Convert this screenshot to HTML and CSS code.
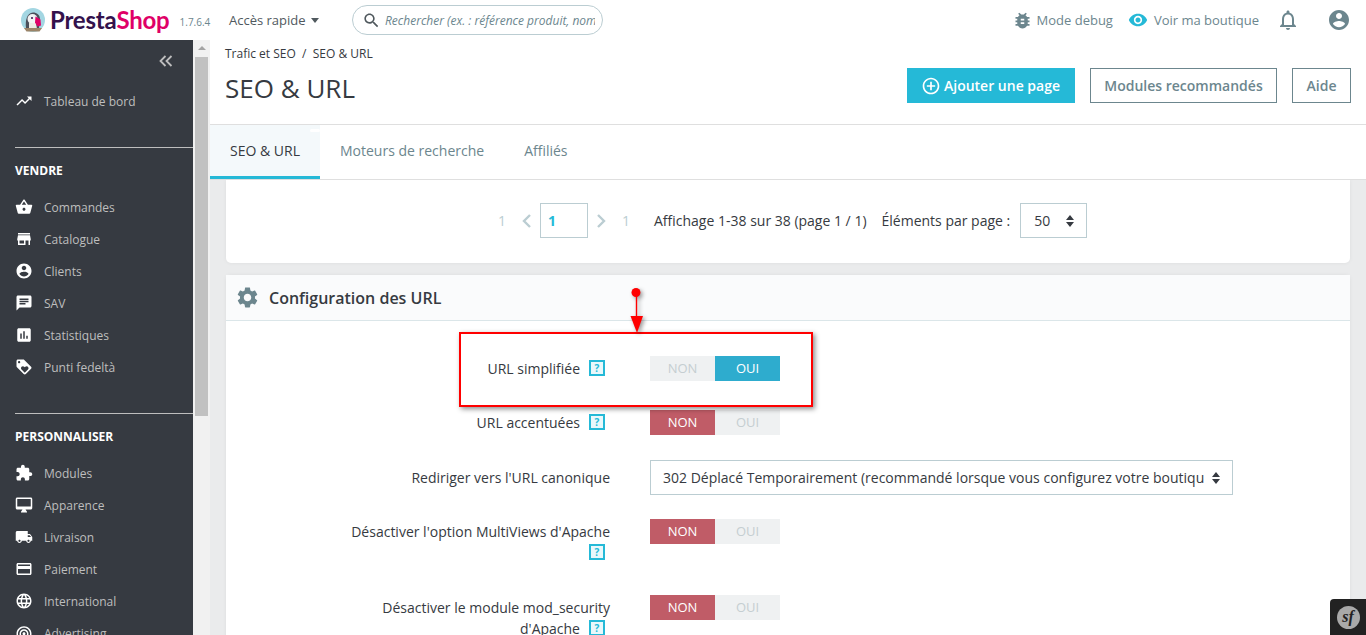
FILE: index.html
```html
<!DOCTYPE html>
<html lang="fr">
<head>
<meta charset="utf-8">
<title>SEO &amp; URL</title>
<link rel="stylesheet" href="styles.css">
</head>
<body>
<svg class="sprite" aria-hidden="true">
  <symbol id="i-trend" viewBox="0 0 24 24"><path d="M16 6l2.29 2.29-4.88 4.88-4-4L2 16.59 3.41 18l6-6 4 4 6.3-6.29L22 12V6z"/></symbol>
  <symbol id="i-basket" viewBox="0 0 24 24"><path d="M17.21 9l-4.38-6.56c-.19-.28-.51-.42-.83-.42-.32 0-.64.14-.83.43L6.79 9H2c-.55 0-1 .45-1 1 0 .09.01.18.04.27l2.54 9.27c.23.84 1 1.46 1.92 1.46h13c.92 0 1.69-.62 1.93-1.46l2.54-9.27L23 10c0-.55-.45-1-1-1h-4.79zM9 9l3-4.4L15 9H9zm3 8c-1.1 0-2-.9-2-2s.9-2 2-2 2 .9 2 2-.9 2-2 2z"/></symbol>
  <symbol id="i-store" viewBox="0 0 24 24"><path d="M20 4H4v2h16V4zm1 10v-2l-1-5H4l-1 5v2h1v6h10v-6h4v6h2v-6h1zm-9 4H6v-4h6v4z"/></symbol>
  <symbol id="i-account" viewBox="0 0 24 24"><path d="M12 2C6.48 2 2 6.48 2 12s4.48 10 10 10 10-4.48 10-10S17.52 2 12 2zm0 3c1.66 0 3 1.34 3 3s-1.34 3-3 3-3-1.34-3-3 1.34-3 3-3zm0 14.2c-2.5 0-4.71-1.28-6-3.22.03-1.99 4-3.08 6-3.08 1.99 0 5.97 1.09 6 3.08-1.29 1.94-3.5 3.22-6 3.22z"/></symbol>
  <symbol id="i-chat" viewBox="0 0 24 24"><path d="M20 2H4c-1.1 0-1.99.9-1.99 2L2 22l4-4h14c1.1 0 2-.9 2-2V4c0-1.1-.9-2-2-2zM6 9h12v2H6V9zm8 5H6v-2h8v2zm4-6H6V6h12v2z"/></symbol>
  <symbol id="i-stats" viewBox="0 0 24 24"><path d="M19 3H5c-1.1 0-2 .9-2 2v14c0 1.1.9 2 2 2h14c1.1 0 2-.9 2-2V5c0-1.1-.9-2-2-2zM9 17H7v-7h2v7zm4 0h-2V7h2v10zm4 0h-2v-4h2v4z"/></symbol>
  <symbol id="i-loyalty" viewBox="0 0 24 24"><path d="M21.41 11.58l-9-9C12.05 2.22 11.55 2 11 2H4c-1.1 0-2 .9-2 2v7c0 .55.22 1.05.59 1.42l9 9c.36.36.86.58 1.41.58s1.05-.22 1.41-.59l7-7c.37-.36.59-.86.59-1.41s-.23-1.06-.59-1.42zM5.5 7C4.67 7 4 6.33 4 5.5S4.67 4 5.5 4 7 4.67 7 5.5 6.33 7 5.5 7zm11.77 8.27L13 19.54l-4.27-4.27C8.28 14.81 8 14.19 8 13.5c0-1.38 1.12-2.5 2.5-2.5.69 0 1.32.28 1.77.74l.73.72.73-.73c.45-.45 1.08-.73 1.77-.73 1.38 0 2.5 1.12 2.5 2.5 0 .69-.28 1.32-.73 1.77z"/></symbol>
  <symbol id="i-puzzle" viewBox="0 0 24 24"><path d="M20.5 11H19V7c0-1.1-.9-2-2-2h-4V3.5C13 2.12 11.88 1 10.5 1S8 2.12 8 3.5V5H4c-1.1 0-1.99.9-1.99 2v3.8H3.5c1.49 0 2.7 1.21 2.7 2.7s-1.21 2.7-2.7 2.7H2V20c0 1.1.9 2 2 2h3.8v-1.5c0-1.49 1.21-2.7 2.7-2.7 1.49 0 2.7 1.21 2.7 2.7V22H17c1.1 0 2-.9 2-2v-4h1.5c1.38 0 2.5-1.12 2.5-2.5S21.88 11 20.5 11z"/></symbol>
  <symbol id="i-desktop" viewBox="0 0 24 24"><path d="M21 2H3c-1.1 0-2 .9-2 2v12c0 1.1.9 2 2 2h7l-2 3v1h8v-1l-2-3h7c1.1 0 2-.9 2-2V4c0-1.1-.9-2-2-2zm0 12H3V4h18v10z"/></symbol>
  <symbol id="i-truck" viewBox="0 0 24 24"><path d="M20 8h-3V4H3c-1.1 0-2 .9-2 2v11h2c0 1.66 1.34 3 3 3s3-1.34 3-3h6c0 1.66 1.34 3 3 3s3-1.34 3-3h2v-5l-3-4zM6 18.5c-.83 0-1.5-.67-1.5-1.5s.67-1.5 1.5-1.5 1.5.67 1.5 1.5-.67 1.5-1.5 1.5zm13.5-9l1.96 2.5H17V9.5h2.5zm-1.5 9c-.83 0-1.5-.67-1.5-1.5s.67-1.5 1.5-1.5 1.5.67 1.5 1.5-.67 1.5-1.5 1.5z"/></symbol>
  <symbol id="i-card" viewBox="0 0 24 24"><path d="M20 4H4c-1.11 0-1.99.89-1.99 2L2 18c0 1.11.89 2 2 2h16c1.11 0 2-.89 2-2V6c0-1.11-.89-2-2-2zm0 14H4v-6h16v6zm0-10H4V6h16v2z"/></symbol>
  <symbol id="i-globe" viewBox="0 0 24 24"><path d="M11.99 2C6.47 2 2 6.48 2 12s4.47 10 9.99 10C17.52 22 22 17.52 22 12S17.52 2 11.99 2zm6.93 6h-2.95c-.32-1.25-.78-2.45-1.38-3.56 1.84.63 3.37 1.91 4.33 3.56zM12 4.04c.83 1.2 1.48 2.53 1.91 3.96h-3.82c.43-1.43 1.08-2.76 1.91-3.96zM4.26 14C4.1 13.36 4 12.69 4 12s.1-1.36.26-2h3.38c-.08.66-.14 1.32-.14 2 0 .68.06 1.34.14 2H4.26zm.82 2h2.95c.32 1.25.78 2.45 1.38 3.56-1.84-.63-3.37-1.9-4.33-3.56zm2.95-8H5.08c.96-1.66 2.49-2.93 4.33-3.56C8.81 5.55 8.35 6.75 8.03 8zM12 19.96c-.83-1.2-1.48-2.53-1.91-3.96h3.82c-.43 1.43-1.08 2.76-1.91 3.96zM14.34 14H9.66c-.09-.66-.16-1.32-.16-2 0-.68.07-1.35.16-2h4.68c.09.65.16 1.32.16 2 0 .68-.07 1.34-.16 2zm.25 5.56c.6-1.11 1.06-2.31 1.38-3.56h2.95c-.96 1.65-2.49 2.93-4.33 3.56zM16.36 14c.08-.66.14-1.32.14-2 0-.68-.06-1.34-.14-2h3.38c.16.64.26 1.31.26 2s-.1 1.36-.26 2h-3.38z"/></symbol>
  <symbol id="i-antenna" viewBox="0 0 24 24"><path d="M12 11c-1.1 0-2 .9-2 2s.9 2 2 2 2-.9 2-2-.9-2-2-2zm6 2c0-3.31-2.69-6-6-6s-6 2.69-6 6c0 2.22 1.21 4.15 3 5.19l1-1.74c-1.19-.7-2-1.97-2-3.45 0-2.21 1.79-4 4-4s4 1.79 4 4c0 1.48-.81 2.75-2 3.45l1 1.74c1.79-1.04 3-2.97 3-5.19zM12 3C6.48 3 2 7.48 2 13c0 3.7 2.01 6.92 4.99 8.65l1-1.73C5.61 18.53 4 15.96 4 13c0-4.42 3.58-8 8-8s8 3.58 8 8c0 2.96-1.61 5.53-4 6.92l1 1.73c2.99-1.73 5-4.95 5-8.65 0-5.52-4.48-10-10-10z"/></symbol>
  <symbol id="i-bug" viewBox="0 0 24 24"><path d="M20 8h-2.81c-.45-.78-1.07-1.45-1.82-1.96L17 4.41 15.59 3l-2.17 2.17C12.96 5.06 12.49 5 12 5c-.49 0-.96.06-1.41.17L8.41 3 7 4.41l1.62 1.63C7.88 6.55 7.26 7.22 6.81 8H4v2h2.09c-.05.33-.09.66-.09 1v1H4v2h2v1c0 .34.04.67.09 1H4v2h2.81c1.04 1.79 2.97 3 5.19 3s4.15-1.21 5.19-3H20v-2h-2.09c.05-.33.09-.66.09-1v-1h2v-2h-2v-1c0-.34-.04-.67-.09-1H20V8zm-6 8h-4v-2h4v2zm0-4h-4v-2h4v2z"/></symbol>
  <symbol id="i-eye" viewBox="0 0 24 24"><path d="M12 4.5C7 4.5 2.73 7.61 1 12c1.73 4.39 6 7.5 11 7.5s9.27-3.11 11-7.5c-1.73-4.39-6-7.5-11-7.5zM12 17c-2.76 0-5-2.24-5-5s2.24-5 5-5 5 2.24 5 5-2.24 5-5 5zm0-8c-1.66 0-3 1.34-3 3s1.34 3 3 3 3-1.34 3-3-1.34-3-3-3z"/></symbol>
  <symbol id="i-bell" viewBox="0 0 24 24"><path d="M12 22c1.1 0 2-.9 2-2h-4c0 1.1.9 2 2 2zm6-6v-5c0-3.07-1.63-5.64-4.5-6.32V4c0-.83-.67-1.5-1.5-1.5s-1.5.67-1.5 1.5v.68C7.64 5.36 6 7.92 6 11v5l-2 2v1h16v-1l-2-2zm-2 1H8v-6c0-2.48 1.51-4.5 4-4.5s4 2.02 4 4.5v6z"/></symbol>
  <symbol id="i-search" viewBox="0 0 24 24"><path d="M15.5 14h-.79l-.28-.27C15.41 12.59 16 11.11 16 9.5 16 5.91 13.09 3 9.5 3S3 5.91 3 9.5 5.91 16 9.5 16c1.61 0 3.09-.59 4.23-1.57l.27.28v.79l5 4.99L20.49 19l-4.99-5zm-6 0C7.01 14 5 11.99 5 9.5S7.01 5 9.5 5 14 7.01 14 9.5 11.99 14 9.5 14z"/></symbol>
  <symbol id="i-gear" viewBox="0 0 24 24"><path d="M19.14 12.94c.04-.3.06-.61.06-.94 0-.32-.02-.64-.07-.94l2.03-1.58c.18-.14.23-.41.12-.61l-1.92-3.32c-.12-.22-.37-.29-.59-.22l-2.39.96c-.5-.38-1.03-.7-1.62-.94l-.36-2.54c-.04-.24-.24-.41-.48-.41h-3.84c-.24 0-.43.17-.47.41l-.36 2.54c-.59.24-1.13.57-1.62.94l-2.39-.96c-.22-.08-.47 0-.59.22L2.74 8.87c-.12.21-.08.47.12.61l2.03 1.58c-.05.3-.09.63-.09.94s.02.64.07.94l-2.03 1.58c-.18.14-.23.41-.12.61l1.92 3.32c.12.22.37.29.59.22l2.39-.96c.5.38 1.03.7 1.62.94l.36 2.54c.05.24.24.41.48.41h3.84c.24 0 .44-.17.47-.41l.36-2.54c.59-.24 1.13-.56 1.62-.94l2.39.96c.22.08.47 0 .59-.22l1.92-3.32c.12-.22.07-.47-.12-.61l-2.01-1.58zM12 15.6c-1.98 0-3.6-1.62-3.6-3.6s1.62-3.6 3.6-3.6 3.6 1.62 3.6 3.6-1.62 3.6-3.6 3.6z"/></symbol>
  <symbol id="i-add" viewBox="0 0 24 24"><path d="M13 7h-2v4H7v2h4v4h2v-4h4v-2h-4V7zm-1-5C6.48 2 2 6.48 2 12s4.48 10 10 10 10-4.48 10-10S17.52 2 12 2zm0 18c-4.41 0-8-3.59-8-8s3.59-8 8-8 8 3.59 8 8-3.59 8-8 8z"/></symbol>
  <symbol id="i-updown" viewBox="0 0 10 14"><path d="M5 1l4 5H1zM5 13L1 8h8z"/></symbol>
</svg>

<header class="topbar">
  <div class="brand">
    <svg class="puffin" viewBox="0 0 24 24" aria-hidden="true">
      <circle cx="12" cy="12" r="12" fill="#a3d6e2"/>
      <path d="M5 20C4 12 6 5 12 4.500c4 0 6.500 2.500 7 6l-1 9.500z" fill="#4b4f5a"/>
      <circle cx="11.500" cy="11" r="5" fill="#f2f3f4"/>
      <circle cx="11" cy="10" r="1" fill="#34124c"/>
      <path d="M8 15h7l1 6H8z" fill="#eceae4"/>
      <path d="M14.500 8.500l5 3 .5 6-3.500 1-2.500-4z" fill="#df0067"/>
      <path d="M3 20h18l-2.500 3.500h-13z" fill="#9b8468"/>
    </svg>
    <span class="wordmark">Presta<span class="wordmark-accent">Shop</span></span>
    <span class="version">1.7.6.4</span>
  </div>
  <div class="quick">Accès rapide<span class="caret"></span></div>
  <div class="search">
    <svg class="search-icon"><use href="#i-search"/></svg>
    <span class="search-text">Rechercher (ex. : référence produit, nom du client…)</span>
  </div>
  <div class="top-actions">
    <span class="top-link"><svg class="top-icon"><use href="#i-bug"/></svg>Mode debug</span>
    <span class="top-link top-link-shop"><svg class="top-icon-eye"><use href="#i-eye"/></svg>Voir ma boutique</span>
    <svg class="bell"><use href="#i-bell"/></svg>
    <svg class="avatar"><use href="#i-account"/></svg>
  </div>
</header>

<div class="frame">
  <nav class="sidebar">
    <div class="collapse"><svg class="collapse-icon" viewBox="0 0 14 12"><path d="M6.500 1L1.500 6l5 5M12.500 1l-5 5 5 5"/></svg></div>
    <a class="nav-item"><svg class="nav-icon"><use href="#i-trend"/></svg>Tableau de bord</a>
    <div class="nav-section">
      <h2 class="nav-title">VENDRE</h2>
      <a class="nav-item"><svg class="nav-icon"><use href="#i-basket"/></svg>Commandes</a>
      <a class="nav-item"><svg class="nav-icon"><use href="#i-store"/></svg>Catalogue</a>
      <a class="nav-item"><svg class="nav-icon"><use href="#i-account"/></svg>Clients</a>
      <a class="nav-item"><svg class="nav-icon"><use href="#i-chat"/></svg>SAV</a>
      <a class="nav-item"><svg class="nav-icon"><use href="#i-stats"/></svg>Statistiques</a>
      <a class="nav-item"><svg class="nav-icon"><use href="#i-loyalty"/></svg>Punti fedeltà</a>
    </div>
    <div class="nav-section">
      <h2 class="nav-title">PERSONNALISER</h2>
      <a class="nav-item"><svg class="nav-icon"><use href="#i-puzzle"/></svg>Modules</a>
      <a class="nav-item"><svg class="nav-icon"><use href="#i-desktop"/></svg>Apparence</a>
      <a class="nav-item"><svg class="nav-icon"><use href="#i-truck"/></svg>Livraison</a>
      <a class="nav-item"><svg class="nav-icon"><use href="#i-card"/></svg>Paiement</a>
      <a class="nav-item"><svg class="nav-icon"><use href="#i-globe"/></svg>International</a>
      <a class="nav-item"><svg class="nav-icon"><use href="#i-antenna"/></svg>Advertising</a>
    </div>
  </nav>
  <div class="scrollbar">
    <span class="scroll-arrow"></span>
    <span class="scroll-thumb"></span>
  </div>

  <main class="main">
    <section class="page-head">
      <div class="head-left">
        <div class="crumbs">Trafic et SEO&nbsp;&nbsp;/&nbsp;&nbsp;SEO &amp; URL</div>
        <h1 class="page-title">SEO &amp; URL</h1>
      </div>
      <div class="head-buttons">
        <a class="btn btn-primary"><svg class="btn-icon"><use href="#i-add"/></svg>Ajouter une page</a>
        <a class="btn btn-outline btn-modules">Modules recommandés</a>
        <a class="btn btn-outline btn-help">Aide</a>
      </div>
    </section>

    <div class="tabs">
      <a class="tab tab-active">SEO &amp; URL</a>
      <a class="tab">Moteurs de recherche</a>
      <a class="tab">Affiliés</a>
    </div>

    <div class="content">
      <section class="card card-list">
        <div class="pager">
          <span class="pager-num">1</span>
          <svg class="chev" viewBox="0 0 10 16"><path d="M8 2L2 8l6 6"/></svg>
          <span class="pager-input">1</span>
          <svg class="chev chev-right" viewBox="0 0 10 16"><path d="M2 2l6 6-6 6"/></svg>
          <span class="pager-num pager-num-last">1</span>
          <span class="pager-info">Affichage 1-38 sur 38 (page 1 / 1)</span>
          <span class="pager-per">Éléments par page :</span>
          <span class="pager-select">50<svg class="updown"><use href="#i-updown"/></svg></span>
        </div>
      </section>

      <section class="card card-form">
        <h3 class="card-head"><svg class="gear"><use href="#i-gear"/></svg>Configuration des URL</h3>
        <div class="form">
          <div class="row row-first">
            <div class="label">URL simplifiée<span class="help">?</span></div>
            <div class="switch"><span class="opt">NON</span><span class="opt opt-yes">OUI</span></div>
          </div>
          <div class="row row-second">
            <div class="label">URL accentuées<span class="help">?</span></div>
            <div class="switch"><span class="opt opt-no">NON</span><span class="opt">OUI</span></div>
          </div>
          <div class="row row-third">
            <div class="label">Rediriger vers l'URL canonique</div>
            <div class="select"><span class="select-text">302 Déplacé Temporairement (recommandé lorsque vous configurez votre boutique)</span><svg class="updown"><use href="#i-updown"/></svg></div>
          </div>
          <div class="row row-fourth">
            <div class="label">Désactiver l'option MultiViews d'Apache<br><span class="help help-line">?</span></div>
            <div class="switch"><span class="opt opt-no">NON</span><span class="opt">OUI</span></div>
          </div>
          <div class="row">
            <div class="label">Désactiver le module mod_security<br>d'Apache<span class="help">?</span></div>
            <div class="switch"><span class="opt opt-no">NON</span><span class="opt">OUI</span></div>
          </div>
        </div>
      </section>
    </div>
  </main>
</div>

<div class="callout" aria-hidden="true"></div>
<svg class="callout-arrow" viewBox="0 0 20 48" aria-hidden="true">
  <circle cx="10" cy="5.500" r="4.500" fill="#f00"/>
  <rect x="9.800" y="5" width="1.400" height="26" fill="#f00"/>
  <path d="M4.500 29h12.500l-6 17z" fill="#f00"/>
</svg>
<div class="sf-badge"><span class="sf-mark">sf</span></div>
</body>
</html>
```

FILE: styles.css
```css
* { box-sizing: border-box; }
html, body { height: 100%; }
body {
  margin: 0;
  height: 635px;
  overflow: hidden;
  position: relative;
  background: #fff;
  color: #363a41;
  font-family: "Open Sans", "Liberation Sans", sans-serif;
  font-size: 14px;
}
h1, h2, h3 { margin: 0; font-weight: 400; }
.sprite { display: none; }

/* Top bar */
.topbar { height: 40px; display: flex; align-items: center; background: #fff; }
.brand { display: flex; align-items: center; width: 229px; padding-left: 21px; }
.puffin { width: 24px; height: 24px; flex: none; }
.wordmark { margin-left: 5px; font-family: "Lato", sans-serif; font-weight: 700; font-size: 24px; line-height: 30px; color: #34124c; letter-spacing: -.2px; }
.wordmark-accent { color: #df0067; }
.version { margin-left: 10px; font-size: 10px; color: #6c868e; padding-top: 3px; }
.quick { display: flex; align-items: center; width: 123px; font-size: 13px; color: #50595e; }
.caret { margin-left: 5px; border-left: 4.5px solid transparent; border-right: 4.5px solid transparent; border-top: 5px solid #50595e; }
.search { display: flex; align-items: center; width: 251px; height: 30px; padding: 0 7px 0 9px; border: 1px solid #bbcdd2; border-radius: 15px; overflow: hidden; }
.search-icon { width: 19px; height: 19px; flex: none; fill: #50595e; }
.search-text { margin-left: 4px; font-style: italic; font-size: 12px; color: #6c868e; white-space: nowrap; overflow: hidden; }
.top-actions { display: flex; align-items: center; margin-left: auto; padding-right: 15px; }
.top-link { display: flex; align-items: center; font-size: 13px; color: #6c868e; }
.top-link-shop { margin-left: 15px; }
.top-icon { width: 21px; height: 21px; margin-right: 4px; fill: #6c868e; }
.top-icon-eye { width: 20px; height: 20px; margin-right: 6px; fill: #25b9d7; }
.bell { width: 24px; height: 24px; margin-left: 17px; fill: #6c868e; }
.avatar { width: 24px; height: 24px; margin-left: 27px; fill: #6c868e; }

/* Frame */
.frame { display: flex; height: 595px; overflow: hidden; }
.sidebar { width: 193px; flex: none; background: #363a41; overflow: hidden; padding-left: 15px; }
.collapse { height: 45px; padding: 15px 20px 0 0; display: flex; justify-content: flex-end; align-items: flex-start; }
.collapse-icon { width: 14px; height: 12px; fill: none; stroke: #bebebe; stroke-width: 1.8; }
.nav-item { display: flex; align-items: center; height: 32px; font-size: 12px; color: #bebebe; }
.nav-icon { width: 18px; height: 18px; margin-right: 11px; flex: none; fill: #fff; }
.nav-section { margin-top: 30px; border-top: 1px solid #bebebe; }
.nav-title { height: 43px; padding-top: 2px; display: flex; align-items: center; font-size: 12px; font-weight: 700; color: #fff; }
.scrollbar { width: 17px; flex: none; background: #f1f1f1; display: flex; flex-direction: column; align-items: center; }
.scroll-arrow { margin-top: 6px; border-left: 4px solid transparent; border-right: 4px solid transparent; border-bottom: 4px solid #a3a3a3; }
.scroll-thumb { width: 13px; height: 359px; margin-top: 7px; background: #c1c1c1; }

/* Main */
.main { flex: 1; min-width: 0; display: flex; flex-direction: column; background: #eaebec; }
.page-head { height: 85px; flex: none; display: flex; justify-content: space-between; background: #fff; border-bottom: 1px solid #dfdfdf; padding: 0 15px; }
.crumbs { font-size: 12px; line-height: 16px; margin-top: 6px; color: #363a41; }
.page-title { font-size: 26px; line-height: 36px; margin-top: 8px; color: #363a41; }
.head-buttons { display: flex; align-items: flex-start; padding-top: 28px; }
.btn { display: flex; align-items: center; justify-content: center; height: 35px; font-size: 14px; font-weight: 600; }
.btn-primary { width: 168px; background: #25b9d7; color: #fff; }
.btn-icon { width: 20px; height: 20px; margin-right: 3px; margin-left: -1px; fill: #fff; }
.btn-outline { border: 1px solid #6c868e; color: #6c868e; background: #fff; margin-left: 15px; }
.btn-modules { width: 187px; }
.btn-help { width: 59px; }

.tabs { height: 55px; flex: none; display: flex; background: #fff; border-bottom: 1px solid #dfdfdf; }
.tab { display: flex; align-items: center; padding: 0 20px; height: 54px; font-size: 14px; color: #6c868e; border-bottom: 3px solid transparent; }
.tab-active { position: relative; background: #f4f9fb; color: #363a41; border-bottom-color: #25b9d7; }
.tab-active::after { content: ""; position: absolute; right: 0; top: 4px; width: 10px; height: 3px; border-radius: 2px; background: #fff; }

.content { flex: 1; min-height: 0; overflow: hidden; padding: 0 16px; }
.card { background: #fff; box-shadow: 0 0 4px rgba(0, 0, 0, .06); }
.card-list { height: 83px; border-radius: 0 0 5px 5px; margin-bottom: 12px; padding-top: 23px; }
.card-form { border-radius: 5px 5px 0 0; }

.pager { display: flex; align-items: center; height: 35px; padding-left: 272px; font-size: 14px; color: #363a41; }
.pager-num { width: 7px; font-size: 14px; color: #bbcdd2; }
.chev { width: 10px; height: 16px; margin-left: 17px; fill: none; stroke: #bbcdd2; stroke-width: 2.4; }
.pager-input { width: 48px; height: 35px; margin-left: 8px; padding: 7px 0 0 7px; border: 1px solid #bbcdd2; color: #25b9d7; font-weight: 700; font-size: 14px; line-height: 20px; }
.chev-right { margin-left: 8px; }
.pager-num-last { margin-left: 16px; }
.pager-info { margin-left: 25px; }
.pager-per { margin-left: 15px; }
.pager-select { display: flex; align-items: center; justify-content: space-between; width: 67px; height: 35px; margin-left: 10px; padding: 0 11px 0 13px; border: 1px solid #bbcdd2; }
.updown { width: 10px; height: 14px; flex: none; fill: #363a41; }

.card-head { display: flex; align-items: center; height: 46px; padding-left: 9px; background: #fafbfc; border-bottom: 1px solid #dbe6e9; font-size: 16px; font-weight: 600; color: #363a41; }
.gear { width: 25px; height: 25px; margin-right: 9px; fill: #6c868e; }
.form { padding-top: 35px; }
.row { display: flex; align-items: flex-start; column-gap: 40px; }
.row-first { margin-bottom: 29px; }
.row-second { margin-bottom: 25px; }
.row-third { margin-bottom: 24px; }
.row-fourth { height: 76px; }
.label { width: 384px; flex: none; text-align: right; font-size: 14px; line-height: 21px; padding-top: 2px; color: #363a41; }
.row-third .label { padding-top: 7px; }
.help { display: inline-block; width: 16px; height: 16px; margin: 0 5px 0 9px; border: 2px solid #25b9d7; background: #e9f8fb; color: #25b9d7; font-size: 10px; font-weight: 700; line-height: 12px; text-align: center; vertical-align: 2px; }
.help-line { margin-left: 0; }
.switch { display: flex; width: 130px; height: 25px; flex: none; }
.opt { flex: 1; display: flex; align-items: center; justify-content: center; padding-bottom: 1px; background: #eff1f2; color: #c5ced1; font-size: 13px; }
.opt-yes { background: #2eacce; color: #fff; }
.opt-no { background: #c05c67; color: #fff; }
.select { display: flex; align-items: center; width: 583px; height: 35px; padding: 0 11px 0 12px; border: 1px solid #bbcdd2; column-gap: 7px; }
.select-text { flex: 1; min-width: 0; overflow: hidden; white-space: nowrap; font-size: 14px; color: #363a41; }

/* Overlays */
.callout { position: absolute; left: 459px; top: 332px; width: 354px; height: 75px; border: 2px solid #f00; box-shadow: 2px 2px 5px rgba(0, 0, 0, .45); }
.callout-arrow { position: absolute; left: 626px; top: 287px; width: 20px; height: 48px; filter: drop-shadow(2px 2px 2px rgba(0, 0, 0, .4)); }
.sf-badge { position: absolute; right: 0; bottom: 0; width: 36px; height: 36px; display: flex; align-items: center; justify-content: center; background: #222; border-radius: 4px 0 0 0; }
.sf-mark { width: 23px; height: 23px; border-radius: 50%; background: #a9a9a9; color: #222; font-family: "Liberation Serif", serif; font-style: italic; font-weight: 700; font-size: 16px; line-height: 21px; text-align: center; }
```
